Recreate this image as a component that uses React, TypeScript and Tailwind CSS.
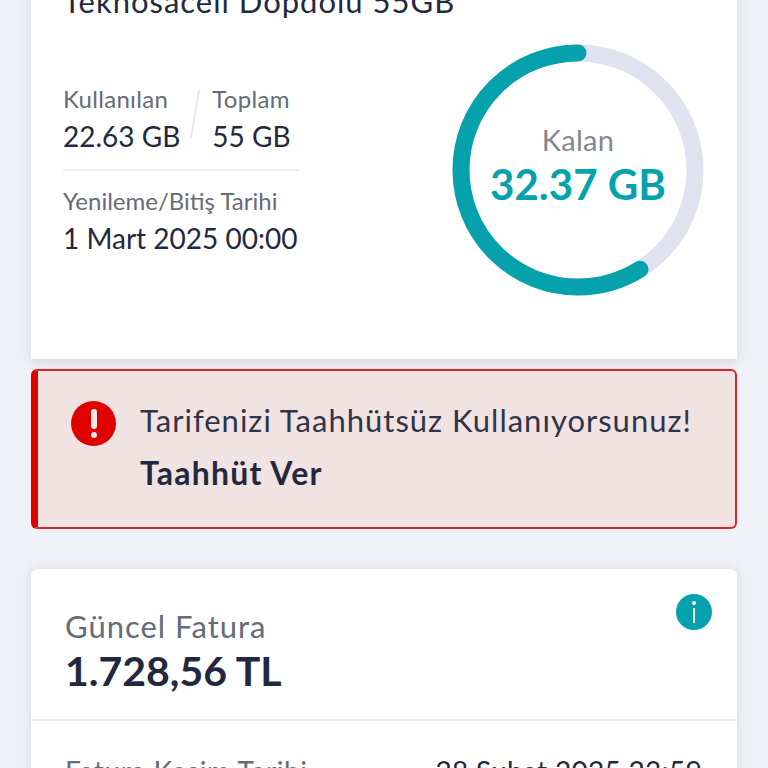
const font = { fontFamily: "Lato, 'Noto Sans', sans-serif" };

const RADIUS = 117;
const CIRC = 2 * Math.PI * RADIUS;
const used = 32.37 / 55;

function Ring() {
  return (
    <div className="relative h-[252px] w-[252px] shrink-0">
      <svg viewBox="0 0 252 252" className="h-full w-full">
        <circle cx="126" cy="126" r={RADIUS} fill="none" stroke="#e0e3ef" strokeWidth="17" />
        <circle
          cx="126"
          cy="126"
          r={RADIUS}
          fill="none"
          stroke="#05a2ad"
          strokeWidth="17"
          strokeLinecap="round"
          strokeDasharray={`${CIRC * used} ${CIRC}`}
          transform="rotate(-90 126 126) scale(1 -1) translate(0 -252)"
        />
      </svg>
      <div className="absolute inset-0 flex flex-col items-center justify-center pb-[9px]">
        <span className="text-[29px] leading-[34px] tracking-[0.3px] text-[#83868f]">Kalan</span>
        <span className="mt-[2px] text-[42px] font-bold leading-[50px] text-[#05a2ad]">32.37 GB</span>
      </div>
    </div>
  );
}

export default function App() {
  return (
    <div style={font} className="h-[768px] w-full overflow-hidden bg-[#f0f1f6] px-[31px] text-[#23283f]">
      {/* usage card, scrolled past the top */}
      <section className="-mt-[19px] h-[378px] bg-white pl-[32px] pr-[33px] shadow-[0_3px_10px_rgba(40,45,80,0.14)]">
        <h2 className="whitespace-nowrap text-[31px] leading-[40px] tracking-[1px]">Teknosacell Dopdolu 55GB</h2>
        <div className="mt-[23px] flex items-start justify-between">
          <div className="mt-[40px] w-[236px]">
            <div className="flex border-b-2 border-[#eceef3] pb-[15px]">
              <div>
                <p className="text-[24px] leading-[30px] tracking-[0.3px] text-[#666b78]">Kullanılan</p>
                <p className="mt-[4px] text-[28px] leading-[36px]">22.63 GB</p>
              </div>
              <div className="ml-[14px] mr-[16px] mt-[5px] h-[50px] w-[2px] rotate-[10deg] bg-[#e6e8ee]" />
              <div>
                <p className="text-[24px] leading-[30px] tracking-[0.3px] text-[#666b78]">Toplam</p>
                <p className="mt-[4px] text-[28px] leading-[36px]">55 GB</p>
              </div>
            </div>
            <p className="mt-[15px] text-[24px] leading-[30px] text-[#666b78]">Yenileme/Bitiş Tarihi</p>
            <p className="mt-[4px] whitespace-nowrap text-[28px] leading-[36px]">1 Mart 2025 00:00</p>
          </div>
          <Ring />
        </div>
      </section>

      {/* commitment warning */}
      <section className="mt-[10px] flex h-[160px] rounded-[6px] border-2 border-[#d6262b] border-l-[7px] border-l-[#e00000] bg-[#f2e3e3] pl-[33px] pt-[30px]">
        <div className="flex h-[45px] w-[45px] shrink-0 flex-col items-center justify-center gap-[3px] rounded-full bg-[#e00000]">
          <span className="h-[20px] w-[6px] rounded-[3px] bg-[#f6e6e6]" />
          <span className="h-[6px] w-[6px] rounded-full bg-[#f6e6e6]" />
        </div>
        <div className="ml-[24px] -mt-px">
          <p className="whitespace-nowrap text-[31px] leading-[40px] tracking-[1px] text-[#2f3449]">Tarifenizi Taahhütsüz Kullanıyorsunuz!</p>
          <p className="mt-[13px] text-[32px] font-bold leading-[40px] tracking-[1.2px]">Taahhüt Ver</p>
        </div>
      </section>

      {/* invoice card */}
      <section className="mt-[40px] rounded-t-[6px] bg-white shadow-[0_0_10px_rgba(40,45,80,0.13)]">
        <div className="relative h-[152px] border-b-2 border-[#e9eaef] pl-[34px] pt-[38px]">
          <p className="text-[31px] leading-[38px] tracking-[1px] text-[#666b78]">Güncel Fatura</p>
          <p className="mt-[2px] text-[41px] font-bold leading-[48px]">1.728,56 TL</p>
          <div className="absolute right-[25px] top-[25px] flex h-[36px] w-[36px] flex-col items-center justify-center gap-[3px] rounded-full bg-[#05a2ad]">
            <span className="h-[4px] w-[4px] rounded-full bg-white" />
            <span className="h-[15px] w-[2px] bg-white" />
          </div>
        </div>
        <div className="flex justify-between pl-[34px] pr-[35px] pt-[32px]">
          <p className="text-[28px] leading-[36px] tracking-[0.6px] text-[#666b78]">Fatura Kesim Tarihi</p>
          <p className="text-[28px] leading-[36px] tracking-[0.3px]">28 Şubat 2025 23:59</p>
        </div>
      </section>
    </div>
  );
}
